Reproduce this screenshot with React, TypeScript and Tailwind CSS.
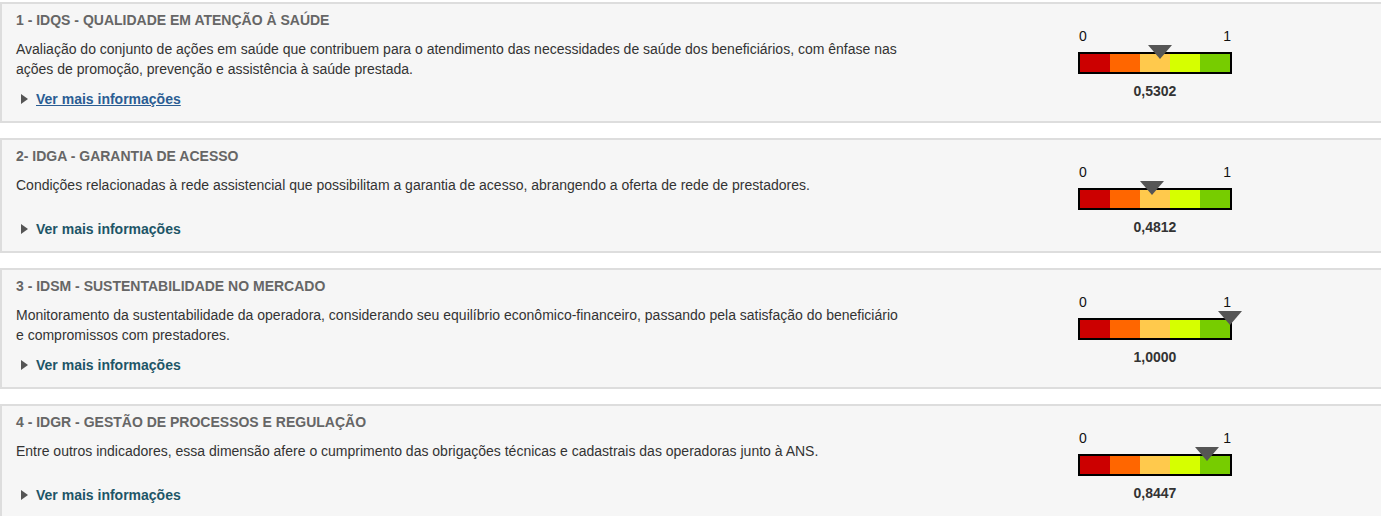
import React from 'react'

type Dimensao = {
  titulo: string
  descricao: string
  valor: number
  destaque?: boolean
}

const dimensoes: Dimensao[] = [
  {
    titulo: '1 - IDQS - QUALIDADE EM ATENÇÃO À SAÚDE',
    descricao:
      'Avaliação do conjunto de ações em saúde que contribuem para o atendimento das necessidades de saúde dos beneficiários, com ênfase nas ações de promoção, prevenção e assistência à saúde prestada.',
    valor: 0.5302,
    destaque: true,
  },
  {
    titulo: '2- IDGA - GARANTIA DE ACESSO',
    descricao:
      'Condições relacionadas à rede assistencial que possibilitam a garantia de acesso, abrangendo a oferta de rede de prestadores.',
    valor: 0.4812,
  },
  {
    titulo: '3 - IDSM - SUSTENTABILIDADE NO MERCADO',
    descricao:
      'Monitoramento da sustentabilidade da operadora, considerando seu equilíbrio econômico-financeiro, passando pela satisfação do beneficiário e compromissos com prestadores.',
    valor: 1,
  },
  {
    titulo: '4 - IDGR - GESTÃO DE PROCESSOS E REGULAÇÃO',
    descricao:
      'Entre outros indicadores, essa dimensão afere o cumprimento das obrigações técnicas e cadastrais das operadoras junto à ANS.',
    valor: 0.8447,
  },
]

const faixas = ['bg-[#cc0000]', 'bg-[#ff6600]', 'bg-[#ffc94c]', 'bg-[#d6ff00]', 'bg-[#77cc00]']

function Regua({ valor }: { valor: number }) {
  // tip of the marker sits on the value inside the 150px inner bar
  const ponta = 2 + valor * 150
  return (
    <div className="w-[154px] pt-4">
      <div className="flex justify-between text-[14px] leading-4 text-[#111] px-px">
        <span>0</span>
        <span>1</span>
      </div>
      <div className="relative mt-[8px]">
        <div className="flex h-[22px] border-2 border-black">
          {faixas.map(c => (
            <div key={c} className={`flex-1 ${c}`} />
          ))}
        </div>
        <div
          className="absolute top-[-7px] w-0 h-0 border-l-[12px] border-r-[12px] border-t-[14px] border-l-transparent border-r-transparent border-t-[#555555]"
          style={{ left: ponta - 12 }}
        />
      </div>
      <div className="mt-[9px] text-center text-[14px] leading-4 font-bold text-[#333]">
        {valor.toFixed(4).replace('.', ',')}
      </div>
    </div>
  )
}

function Card({ d }: { d: Dimensao }) {
  return (
    <div className="flex border-2 border-r-0 border-[#dddddd] bg-[#f6f6f6] pl-[14px] pt-2 pb-3">
      <div className="w-[1062px] flex-none">
        <h3 className="text-[14px] leading-4 font-bold text-[#666]">{d.titulo}</h3>
        <p className="mt-[11px] min-h-[34px] max-w-[888px] text-[14px] leading-5 text-[#333]">
          {d.descricao}
        </p>
        <div className="mt-[10px] flex items-center h-5 pl-[5px]">
          <span className="w-0 h-0 border-t-[5px] border-b-[5px] border-l-[7px] border-t-transparent border-b-transparent border-l-[#555]" />
          <a
            href="#"
            className={`ml-[8px] text-[14px] leading-5 font-bold ${
              d.destaque ? 'text-[#2a5d93] underline' : 'text-[#1d5567]'
            }`}
          >
            Ver mais informações
          </a>
        </div>
      </div>
      <Regua valor={d.valor} />
    </div>
  )
}

export default function App() {
  return (
    <main
      className="min-h-screen bg-white pt-[2px] overflow-hidden"
      style={{ fontFamily: '"Liberation Sans", Arial, sans-serif' }}
    >
      <div className="flex flex-col gap-[15px] w-[1400px]">
        {dimensoes.map(d => (
          <Card key={d.titulo} d={d} />
        ))}
      </div>
    </main>
  )
}
